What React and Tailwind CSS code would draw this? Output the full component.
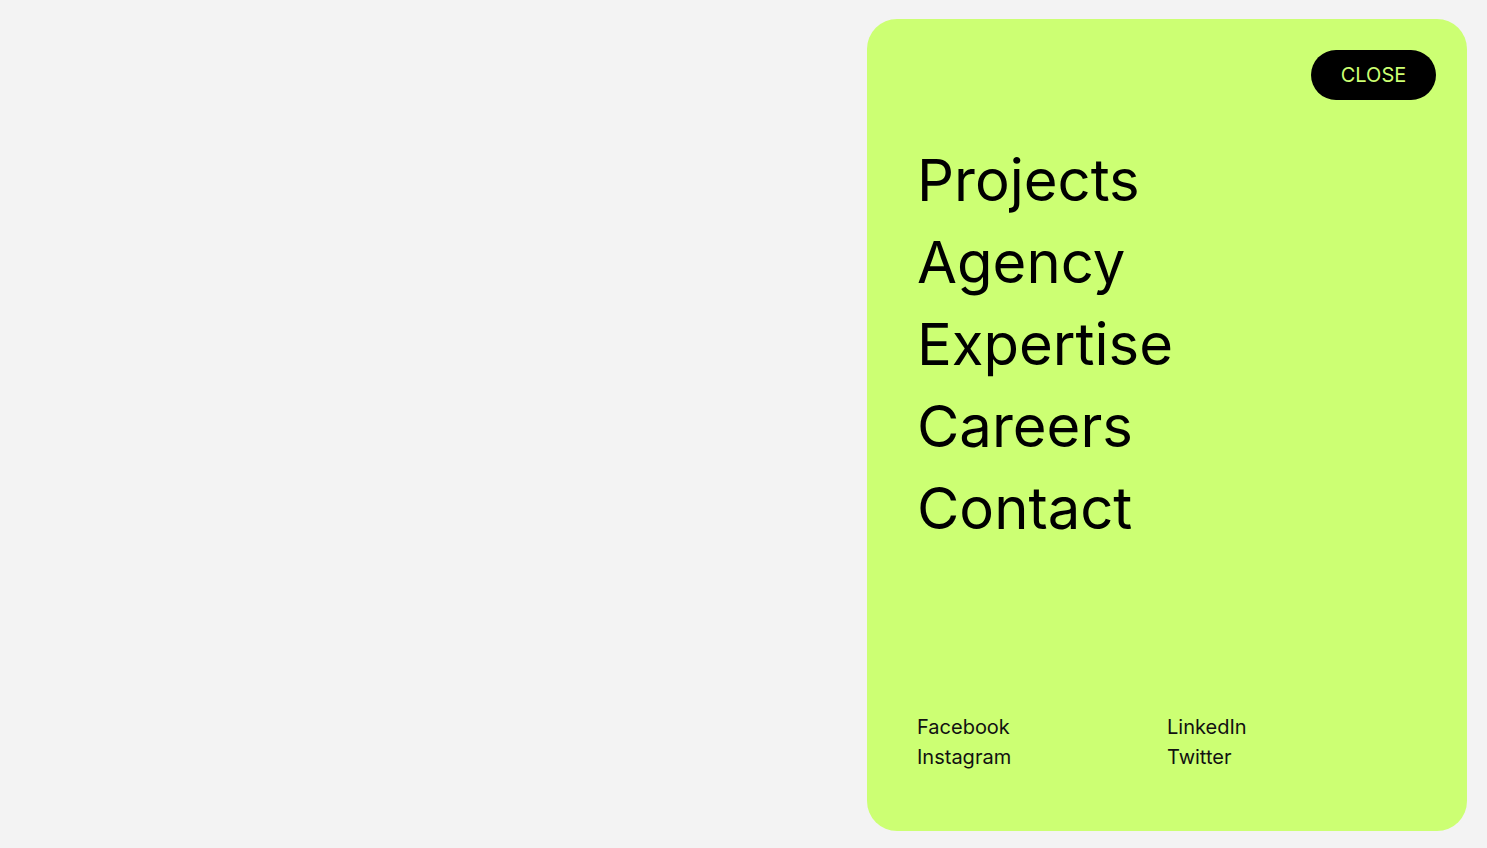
const links = ['Projects', 'Agency', 'Expertise', 'Careers', 'Contact'];
const socials = ['Facebook', 'LinkedIn', 'Instagram', 'Twitter'];

export default function App() {
  return (
    <div
      className="min-h-screen bg-[#f3f3f3] flex justify-end pt-[19px] pb-[17px] pr-[20px]"
      style={{ fontFamily: 'Inter, "Noto Sans", sans-serif' }}
    >
      <div className="w-[600px] h-[812px] bg-[#ccff73] rounded-[30px] flex flex-col px-[50px] pt-[31px] pb-[59px]">
        <div className="flex justify-end -mr-[19px]">
          <button className="w-[125px] h-[50px] rounded-full bg-black text-[#ccff73] text-[20px] leading-none">
            CLOSE
          </button>
        </div>

        <nav className="mt-[39px] flex flex-col">
          {links.map(l => (
            <a key={l} className="text-[58px] leading-[82px] text-black">
              {l}
            </a>
          ))}
        </nav>

        <div className="mt-auto grid grid-cols-2">
          {socials.map(s => (
            <a key={s} className="text-[20px] leading-[30px] text-[#111]">
              {s}
            </a>
          ))}
        </div>
      </div>
    </div>
  );
}
